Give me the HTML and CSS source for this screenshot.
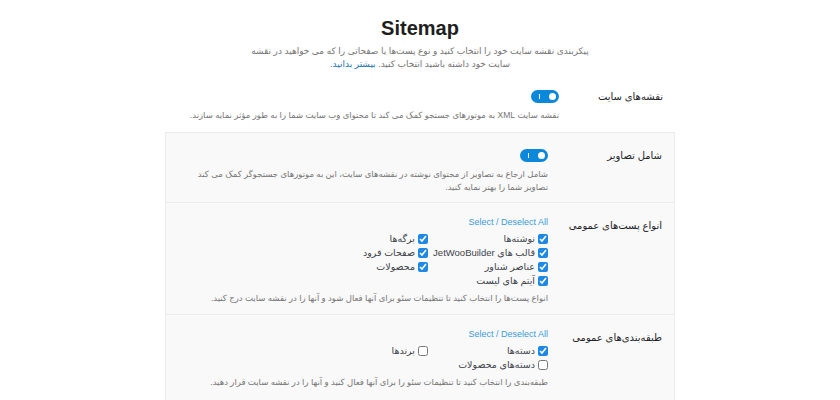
FILE: index.html
```html
<!DOCTYPE html>
<html lang="fa">
  <head>
    <meta charset="UTF-8" />
    <meta name="viewport" content="width=device-width, initial-scale=1.0" />
    <title>Sitemap</title>
    <link rel="stylesheet" href="styles.css">
  </head>
  <body>
    <div class="header">
      <h1>Sitemap</h1>
      <p class="intro" dir="rtl">
        پیکربندی نقشه سایت خود را انتخاب کنید و نوع پست‌ها یا صفحاتی را که می خواهید در نقشه
        سایت خود داشته باشید انتخاب کنید. <a href="#">بیشتر بدانید.</a>
      </p>
    </div>

    <div class="panel" dir="rtl">
      <div class="row row-plain">
        <div class="label">نقشه‌های سایت</div>
        <div class="content">
          <span class="toggle"><span class="knob"></span></span>
          <p class="desc">نقشه سایت XML به موتورهای جستجو کمک می کند تا محتوای وب سایت شما را به طور مؤثر نمایه سازند.</p>
        </div>
      </div>

      <div class="row row-images">
        <div class="label">شامل تصاویر</div>
        <div class="content">
          <span class="toggle"><span class="knob"></span></span>
          <p class="desc">شامل ارجاع به تصاویر از محتوای نوشته در نقشه‌های سایت، این به موتورهای جستجوگر کمک می کند<br />تصاویر شما را بهتر نمایه کنید.</p>
        </div>
      </div>

      <div class="row row-posts">
        <div class="label">انواع پست‌های عمومی</div>
        <div class="content">
          <a class="select-all" href="#" dir="ltr">Select / Deselect All</a>
          <div class="checks">
            <label><input type="checkbox" checked /> نوشته‌ها</label>
            <label><input type="checkbox" checked /> برگه‌ها</label>
            <label><input type="checkbox" checked /> قالب های JetWooBuilder</label>
            <label><input type="checkbox" checked /> صفحات فرود</label>
            <label><input type="checkbox" checked /> عناصر شناور</label>
            <label><input type="checkbox" checked /> محصولات</label>
            <label><input type="checkbox" checked /> آیتم های لیست</label>
          </div>
          <p class="desc">انواع پست‌ها را انتخاب کنید تا تنظیمات سئو برای آنها فعال شود و آنها را در نقشه سایت درج کنید.</p>
        </div>
      </div>

      <div class="row row-tax">
        <div class="label">طبقه‌بندی‌های عمومی</div>
        <div class="content">
          <a class="select-all" href="#" dir="ltr">Select / Deselect All</a>
          <div class="checks">
            <label><input type="checkbox" checked /> دسته‌ها</label>
            <label><input type="checkbox" /> برندها</label>
            <label><input type="checkbox" /> دسته‌های محصولات</label>
          </div>
          <p class="desc">طبقه‌بندی را انتخاب کنید تا تنظیمات سئو را برای آنها فعال کنید و آنها را در نقشه سایت قرار دهید.</p>
        </div>
      </div>
    </div>
  </body>
</html>
```

FILE: styles.css
```css
body {
  font-family: "Liberation Sans", "DejaVu Sans", sans-serif;
  background-color: #ffffff;
  color: #1e1e1e;
  margin: 0;
  padding: 0;
}

.header {
  text-align: center;
  padding-top: 17px;
}

h1 {
  font-size: 20px;
  font-weight: bold;
  margin: 0 0 5px 0;
  color: #1e1e1e;
}

.intro {
  font-size: 9px;
  line-height: 13px;
  color: #757575;
  max-width: 340px;
  margin: 0 auto;
}

.intro a {
  color: #2271b1;
  text-decoration: none;
}

.panel {
  width: 510px;
  margin: 14px auto 0 auto;
}

.row {
  display: flex;
  padding: 0 12px;
  gap: 12px;
  background-color: #f9f9f9;
  border: 1px solid #ececec;
  border-bottom: none;
}

.row-plain {
  background-color: #ffffff;
  border: none;
  padding-top: 5px;
  height: 42px;
}

.row-images {
  padding-top: 16px;
  height: 53px;
}

.row-posts {
  padding-top: 13px;
  height: 98px;
}

.row-tax {
  padding-top: 13px;
  height: 85px;
}

.label {
  width: 92px;
  flex-shrink: 0;
  font-size: 10px;
  line-height: 14px;
  white-space: nowrap;
  color: #1d2327;
}

.row-posts .label,
.row-tax .label {
  padding-top: 3px;
}

.content {
  flex: 1;
}

.row-images .content,
.row-posts .content,
.row-tax .content {
  padding-right: 10px;
}

.toggle {
  display: block;
  position: relative;
  width: 28px;
  height: 13px;
  border-radius: 7px;
  background-color: #0c88da;
}

.toggle::after {
  content: "";
  position: absolute;
  left: 8px;
  top: 4px;
  width: 1px;
  height: 5px;
  background-color: #ffffff;
}

.knob {
  position: absolute;
  right: 3px;
  top: 3px;
  width: 7px;
  height: 7px;
  border-radius: 50%;
  background-color: #ffffff;
}

.desc {
  font-size: 8.5px;
  line-height: 13px;
  color: #757575;
  margin: 6px 0 0 0;
}

.row-posts .desc,
.row-tax .desc {
  margin-top: 4px;
}

.select-all {
  display: block;
  font-size: 9px;
  line-height: 12px;
  color: #3a9bd9;
  text-decoration: none;
  text-align: right;
  margin-bottom: 4px;
}

.checks {
  display: grid;
  grid-template-columns: 120px 120px;
}

.checks label {
  display: flex;
  align-items: center;
  gap: 3px;
  font-size: 9.5px;
  line-height: 14px;
  color: #3c434a;
}

.checks input {
  width: 10px;
  height: 10px;
  margin: 0;
  accent-color: #1e88e5;
}
```
